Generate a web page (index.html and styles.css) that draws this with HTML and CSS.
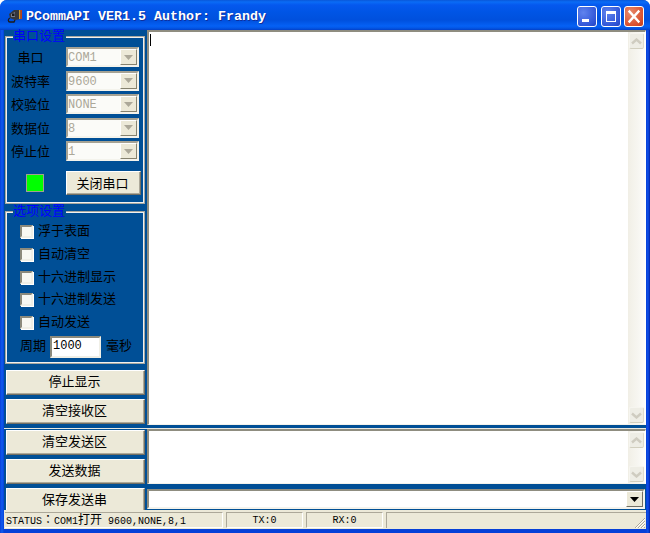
FILE: index.html
```html
<!DOCTYPE html>
<html lang="zh">
<head>
<meta charset="utf-8">
<title>PCommAPI</title>
<link rel="stylesheet" href="styles.css">
</head>
<body>
<div class="window">
  <header class="titlebar">
    <svg class="app-icon" width="16" height="16" viewBox="0 0 16 16">
      <path d="M2 6 L7 2 L14 2 L14 11 L8 12 L3 10 Z" fill="#34363c"/>
      <path d="M4 6 L8 4 L8 9 L4 9 Z" fill="#767b88"/>
      <rect x="5" y="5.500" width="2.500" height="2.500" fill="#15171c"/>
      <rect x="12" y="2" width="1.500" height="9" fill="#d09a28"/>
      <rect x="13.500" y="2" width="1.500" height="9" fill="#b8401c"/>
      <path d="M3 10 C0.500 11 1 14 3 14 L7 14 L8 12" fill="none" stroke="#1c1c1c" stroke-width="1.300"/>
    </svg>
    <span class="title-text">PCommAPI VER1.5 Author: Frandy</span>
    <div class="caption-buttons">
      <div class="cap-btn cap-blue"><svg width="18" height="19" viewBox="0 0 18 19"><rect x="4" y="12" width="7" height="3" fill="#fff"/></svg></div>
      <div class="cap-btn cap-blue"><svg width="18" height="19" viewBox="0 0 18 19"><rect x="4.500" y="4.500" width="9" height="10" fill="none" stroke="#fff"/><rect x="4" y="4" width="10" height="3" fill="#fff"/></svg></div>
      <div class="cap-btn cap-red"><svg width="18" height="19" viewBox="0 0 18 19"><path d="M4.500 4.500 L13.500 14.500 M13.500 4.500 L4.500 14.500" stroke="#fff" stroke-width="2.400" stroke-linecap="square"/></svg></div>
    </div>
  </header>

  <main class="client">
    <section class="top-panel">
      <div class="left-col">
        <div class="group group-port">
          <span class="legend">串口设置</span>
          <div class="form-row"><span class="row-label">串口</span><div class="combo"><span class="combo-text">COM1</span><span class="combo-btn"><svg width="9" height="5" viewBox="0 0 9 5"><path d="M0 0 H9 L4.500 5 Z" fill="#aca899"/></svg></span></div></div>
          <div class="form-row"><span class="row-label">波特率</span><div class="combo"><span class="combo-text">9600</span><span class="combo-btn"><svg width="9" height="5" viewBox="0 0 9 5"><path d="M0 0 H9 L4.500 5 Z" fill="#aca899"/></svg></span></div></div>
          <div class="form-row"><span class="row-label">校验位</span><div class="combo"><span class="combo-text">NONE</span><span class="combo-btn"><svg width="9" height="5" viewBox="0 0 9 5"><path d="M0 0 H9 L4.500 5 Z" fill="#aca899"/></svg></span></div></div>
          <div class="form-row"><span class="row-label">数据位</span><div class="combo"><span class="combo-text">8</span><span class="combo-btn"><svg width="9" height="5" viewBox="0 0 9 5"><path d="M0 0 H9 L4.500 5 Z" fill="#aca899"/></svg></span></div></div>
          <div class="form-row"><span class="row-label">停止位</span><div class="combo"><span class="combo-text">1</span><span class="combo-btn"><svg width="9" height="5" viewBox="0 0 9 5"><path d="M0 0 H9 L4.500 5 Z" fill="#aca899"/></svg></span></div></div>
          <div class="action-row">
            <div class="led"></div>
            <button class="btn btn-open">关闭串口</button>
          </div>
        </div>

        <div class="group group-options">
          <span class="legend">选项设置</span>
          <label class="check-row"><input class="check" type="checkbox"><span class="lifted">浮于表面</span></label>
          <label class="check-row"><input class="check" type="checkbox"><span class="lifted">自动清空</span></label>
          <label class="check-row"><input class="check" type="checkbox"><span class="lifted">十六进制显示</span></label>
          <label class="check-row"><input class="check" type="checkbox"><span class="lifted">十六进制发送</span></label>
          <label class="check-row"><input class="check" type="checkbox"><span class="lifted">自动发送</span></label>
          <div class="period-row"><span class="lifted period-label">周期</span><div class="period-input">1000</div><span class="lifted">毫秒</span></div>
        </div>

        <button class="btn btn-wide btn-first">停止显示</button>
        <button class="btn btn-wide">清空接收区</button>
      </div>

      <div class="memo memo-receive">
        <div class="memo-body"><i class="caret"></i></div>
        <div class="scrollbar">
          <span class="sb-btn"><svg width="11" height="7" viewBox="0 0 11 7"><path d="M1 5.500 L5.500 1.500 L10 5.500" fill="none" stroke="#cfccc0" stroke-width="2.400"/></svg></span>
          <span class="sb-btn"><svg width="11" height="7" viewBox="0 0 11 7"><path d="M1 1.500 L5.500 5.500 L10 1.500" fill="none" stroke="#cfccc0" stroke-width="2.400"/></svg></span>
        </div>
      </div>
    </section>

    <section class="bottom-panel">
      <div class="bottom-left">
        <button class="btn btn-wide btn-send">清空发送区</button>
        <button class="btn btn-wide btn-send">发送数据</button>
        <button class="btn btn-wide">保存发送串</button>
      </div>
      <div class="bottom-right">
        <div class="memo memo-send">
          <div class="memo-body"></div>
          <div class="scrollbar">
            <span class="sb-btn"><svg width="11" height="7" viewBox="0 0 11 7"><path d="M1 5.500 L5.500 1.500 L10 5.500" fill="none" stroke="#cfccc0" stroke-width="2.400"/></svg></span>
            <span class="sb-btn"><svg width="11" height="7" viewBox="0 0 11 7"><path d="M1 1.500 L5.500 5.500 L10 1.500" fill="none" stroke="#cfccc0" stroke-width="2.400"/></svg></span>
          </div>
        </div>
        <div class="save-combo">
          <span class="save-btn"><svg width="9" height="5" viewBox="0 0 9 5"><path d="M0 0 H9 L4.500 5 Z" fill="#000"/></svg></span>
        </div>
      </div>
    </section>

    <footer class="statusbar">
      <div class="status-cell status-main">STATUS<span class="status-cjk status-colon" lang="zh-Hant">：</span>COM1<span class="status-cjk">打开</span> 9600,NONE,8,1</div>
      <div class="status-cell status-count">TX:0</div>
      <div class="status-cell status-count">RX:0</div>
      <div class="status-cell status-rest">
        <svg class="grip" width="13" height="13" viewBox="0 0 13 13"><path d="M12 2 L2 12 M12 5 L5 12 M12 8 L8 12 M12 11 L11 12" stroke="#aca899" stroke-width="1" fill="none"/><path d="M12 3 L3 12 M12 6 L6 12 M12 9 L9 12" stroke="#fff" stroke-width="1" fill="none"/></svg>
      </div>
    </footer>
  </main>
</div>
</body>
</html>
```
FILE: styles.css
```css
* { box-sizing: border-box; }
html, body { margin: 0; padding: 0; background: #fff; }
body {
  width: 650px;
  height: 533px;
  overflow: hidden;
  font: 13px "Liberation Mono", "Noto Sans CJK SC", monospace;
  color: #000;
}
.window {
  width: 650px;
  height: 533px;
  display: flex;
  flex-direction: column;
  background: linear-gradient(90deg, #0a3fd8 0, #0f5cf0 2px, #0640d8 4px, #0640d8 646px, #0f4fe8 648px, #0020a8 650px);
  border-radius: 7px 7px 0 0;
  overflow: hidden;
}
.titlebar {
  height: 30px;
  flex: none;
  display: flex;
  align-items: center;
  padding: 2px 6px 0 7px;
  background: linear-gradient(180deg, #0a57d8 0, #0a6cf6 2px, #0558ee 5px, #0055e5 12px, #0050dd 20px, #0561f5 26px, #0457e6 28px, #0340c8 30px);
}
.app-icon { flex: none; margin-right: 3px; }
.title-text {
  font-weight: 700;
  font-size: 13.33px;
  color: #fff;
  text-shadow: 1px 1px 0 #0f2f9c;
  white-space: pre;
}
.caption-buttons { margin-left: auto; display: flex; gap: 3.5px; }
.cap-btn {
  width: 20px;
  height: 21px;
  border: 1px solid #fff;
  border-radius: 3px;
  display: flex;
  align-items: center;
  justify-content: center;
}
.cap-blue { background: radial-gradient(circle at 30% 30%, #5f83ee, #2f54d6 75%, #2445c0); }
.cap-red { background: radial-gradient(circle at 30% 30%, #e88a6c, #d9502e 70%, #c23c1c); }

.client {
  flex: none;
  height: 499px;
  margin: 0 4px;
  display: flex;
  flex-direction: column;
  background: #004f96;
}
.top-panel { height: 395px; flex: none; display: flex; }
.left-col { width: 143px; flex: none; padding: 6px 0 0 1px; display: flex; flex-direction: column; }
.group {
  position: relative;
  width: 140px;
  border: 1px solid #a8a8a0;
  box-shadow: inset 0 0 0 1px #f0f0f0;
}
.group-port { height: 168px; padding: 10px 0 0 0; display: flex; flex-direction: column; gap: 3.5px; }
.group-options { height: 153px; margin-top: 7px; padding: 13px 0 0 14px; display: flex; flex-direction: column; gap: 9.750px; }
.legend {
  position: absolute;
  left: 7px;
  top: -7px;
  padding: 0 1px 0 0;
  background: #004f96;
  color: #0000ff;
  font-size: 13px;
  line-height: 14px;
}
.form-row { height: 20px; display: flex; align-items: center; }
.row-label { width: 49px; margin-right: 11px; padding-top: 4px; text-align: center; line-height: 20px; white-space: nowrap; }
.combo {
  width: 73px;
  height: 20px;
  display: flex;
  background: #fbfbf8;
  border: 2px solid #a5a294;
  border-right-color: #f4f3ec;
  border-bottom-color: #f4f3ec;
}
.combo-text { flex: 1; color: #aca899; font-size: 12px; line-height: 18px; }
.combo-btn {
  width: 17px;
  flex: none;
  display: flex;
  align-items: center;
  justify-content: center;
  background: #ece9d8;
  border: 1px solid #fff;
  border-right-color: #85826f;
  border-bottom-color: #85826f;
}
.action-row { display: flex; align-items: flex-start; margin-top: 6.500px; padding-left: 20px; }
.led {
  width: 18px;
  height: 18px;
  margin: 3px 22px 0 0;
  background: #00ff00;
  border: 1px solid #a0a090;
}
.btn {
  display: block;
  padding: 0 2px 4px 0;
  margin: 0;
  font: inherit;
  color: #000;
  background: #ece9d8;
  border: 1px solid;
  border-color: #fff #716f64 #716f64 #fff;
  box-shadow: inset -1px -1px 0 #aca899;
  border-radius: 0;
}
.btn-open { width: 75px; height: 24px; flex: none; padding-bottom: 2px; }
.btn-wide { width: 139px; height: 25px; margin-left: 1px; flex: none; }
.btn-first { margin-top: 6px; margin-bottom: 4px; }

.check-row { height: 13px; display: flex; align-items: center; gap: 5px; white-space: nowrap; }
.lifted { padding-bottom: 4px; }
.check {
  appearance: none;
  width: 13px;
  height: 13px;
  margin: 0;
  flex: none;
  background: #f8f8f2;
  border: 2px solid #8c8a7c;
  border-right-color: #f0efe6;
  border-bottom-color: #f0efe6;
  border-radius: 0;
  box-shadow: 1px 1px 0 #fff;
}
.period-row { display: flex; align-items: center; gap: 5px; margin-top: -3px; height: 22px; white-space: nowrap; }
.period-label { margin-right: -1px; }
.period-input {
  width: 51px;
  height: 22px;
  background: #fff;
  border: 2px solid #8c8a7c;
  border-right-color: #f0efe6;
  border-bottom-color: #f0efe6;
  font-size: 12px;
  line-height: 16px;
  padding-left: 1px;
}

.memo { display: flex; background: #fff; border: 2px solid #8f8d80; border-right: 1px solid #fff; border-bottom: 1px solid #f4f3ec; }
.memo-receive { flex: 1; }
.memo-body { flex: 1; background: #fff; padding: 2px 0 0 1px; }
.caret { display: block; width: 1px; height: 12px; background: #000; }
.scrollbar {
  width: 17px;
  flex: none;
  display: flex;
  flex-direction: column;
  justify-content: space-between;
  padding: 1px;
  background: linear-gradient(90deg, #f1efe6, #f7f6f1 60%, #fdfdfb);
}
.sb-btn {
  height: 16px;
  display: flex;
  align-items: center;
  justify-content: center;
  background: #eeede5;
  border: 1px solid #f6f5ef;
  border-right-color: #dedbcc;
  border-bottom-color: #d2cfbf;
  border-radius: 2px;
}

.bottom-panel { flex: none; height: 82px; margin-top: 3px; display: flex; border-top: 1px solid #e8e8e0; overflow: hidden; }
.bottom-left { width: 143px; flex: none; padding: 1px 0 0 1px; display: flex; flex-direction: column; }
.btn-send { margin-bottom: 4px; }
.bottom-right { flex: 1; display: flex; flex-direction: column; }
.memo-send { height: 55px; flex: none; }
.save-combo {
  height: 20px;
  margin: 5px 1px 0 0;
  display: flex;
  justify-content: flex-end;
  background: #fff;
  border: 2px solid #8f8d80;
  border-right-color: #f4f3ec;
  border-bottom-color: #f4f3ec;
}
.save-btn {
  width: 17px;
  display: flex;
  align-items: center;
  justify-content: center;
  background: #ece9d8;
  border: 1px solid #fff;
  border-right-color: #716f64;
  border-bottom-color: #716f64;
}

.statusbar {
  flex: none;
  height: 19px;
  display: flex;
  gap: 3px;
  padding: 2px 0 1px 1px;
  background: #ece9d8;
  font-size: 10px;
}
.status-cell {
  height: 16px;
  border: 1px solid #aca899;
  border-right-color: #fff;
  border-bottom-color: #fff;
  line-height: 15px;
  white-space: pre;
}
.status-cjk { font-size: 12px; line-height: 12px; }
.status-colon { font-family: "Noto Sans CJK TC", sans-serif; }
.status-main { width: 218px; padding-left: 1px; border-left: 0; }
.status-count { width: 77px; text-align: center; }
.status-rest { flex: 1; position: relative; border-right: 0; border-bottom: 0; }
.grip { position: absolute; right: 0; bottom: -1px; }
```
